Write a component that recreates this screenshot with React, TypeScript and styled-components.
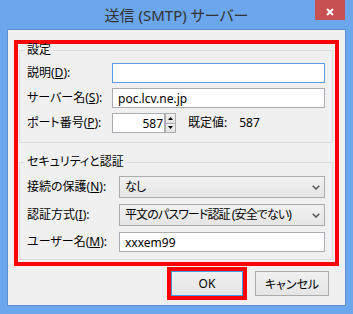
import React from 'react';
import styled, { createGlobalStyle } from 'styled-components';

const Global = createGlobalStyle`
  html, body { margin: 0; padding: 0; background: #6ca6ec; }
  body {
    font-family: "Noto Sans", "Noto Sans CJK JP", sans-serif;
    font-feature-settings: "palt";
  }
  * { box-sizing: border-box; }
`;

const Window = styled.div`
  width: 353px;
  height: 314px;
  background: #6ca6ec;
  display: flex;
  flex-direction: column;
  padding: 0 7px 8px;
`;

const TitleBar = styled.div`
  height: 29px;
  display: grid;
  grid-template-columns: 1fr auto 1fr;
  align-items: start;
`;

const Title = styled.div`
  grid-column: 2;
  align-self: center;
  font-size: 15px;
  line-height: 18px;
  color: #333;
  padding-top: 1px;
  white-space: nowrap;
`;

const CloseButton = styled.div`
  grid-column: 3;
  justify-self: end;
  margin-right: 1px;
  width: 30px;
  height: 20px;
  background: #c75050;
  display: flex;
  align-items: center;
  justify-content: center;
  padding-top: 3px;
`;

const Client = styled.div`
  flex: 1;
  background: #f0f0f0;
  border: 1px solid #5b8fd1;
  padding: 10px 6px 0;
  display: flex;
  flex-direction: column;
`;

const Highlight = styled.div`
  border: 4px solid #ff0000;
  padding: 0 2px 2px 1px;
  display: flex;
  flex-direction: column;
  gap: 13px;
`;

const Group = styled.fieldset<{ $pad: string }>`
  margin: 0;
  min-width: 0;
  border: 1px solid #dcdcdc;
  padding: ${p => p.$pad};
`;

const Legend = styled.legend`
  padding: 0 2px;
  margin-left: -2px;
  font-size: 12px;
  line-height: 12px;
  color: #000;
`;

const Rows = styled.div<{ $label: number; $gap: number }>`
  display: grid;
  grid-template-columns: ${p => p.$label}px 1fr;
  row-gap: ${p => p.$gap}px;
  align-items: center;
`;

const Label = styled.label`
  font-size: 12px;
  line-height: 16px;
  color: #000;
  white-space: nowrap;
`;

const TextBox = styled.input<{ $focused?: boolean; $align?: string; $width?: number }>`
  width: ${p => (p.$width ? `${p.$width}px` : '100%')};
  height: 20px;
  border: 1px solid ${p => (p.$focused ? '#569de5' : '#abadb3')};
  background: #fff;
  padding: 0 ${p => (p.$align === 'right' ? '1px' : '5px')};
  text-align: ${p => p.$align || 'left'};
  font-family: "Noto Sans", "Noto Sans CJK JP", sans-serif;
  font-feature-settings: "palt";
  font-size: 12px;
  color: #000;
  outline: none;
  margin: 0;
`;

const PortRow = styled.div`
  display: flex;
  align-items: center;
`;

const Spin = styled.div`
  display: flex;
  flex-direction: column;
  width: 11px;
  height: 20px;
`;

const SpinHalf = styled.div`
  flex: 1;
  border: 1px solid #acacac;
  background: linear-gradient(#f2f2f2, #e3e3e3);
  display: flex;
  align-items: center;
  justify-content: center;
  & + & { border-top: none; }
`;

const DefaultText = styled.span<{ $ml: number }>`
  font-size: 12px;
  line-height: 16px;
  color: #000;
  margin-left: ${p => p.$ml}px;
  white-space: nowrap;
`;

const Dropdown = styled.div`
  height: 22px;
  border: 1px solid #acacac;
  background: linear-gradient(#f2f2f2, #e5e5e5);
  display: flex;
  align-items: center;
  justify-content: space-between;
  padding: 0 4px 0 5px;
  font-size: 12px;
  line-height: 16px;
  color: #000;
  white-space: nowrap;
  overflow: hidden;
`;

const DropdownValue = styled.span`
  letter-spacing: -0.9px;
`;

const ButtonRow = styled.div`
  margin-top: 1px;
  display: flex;
  justify-content: flex-end;
  align-items: center;
  gap: 8px;
  padding-right: 10px;
`;

const RedFrame = styled.div`
  border: 4px solid #ff0000;
  display: flex;
`;

const Button = styled.button<{ $default?: boolean; $width: number }>`
  width: ${p => p.$width}px;
  height: 25px;
  border: 1px solid ${p => (p.$default ? '#3c9ae8' : '#acacac')};
  background: linear-gradient(#f0f0f0, #e5e5e5);
  font-family: "Noto Sans", "Noto Sans CJK JP", sans-serif;
  font-feature-settings: "palt";
  font-size: 12px;
  color: #000;
  padding: 0;
  margin: 0;
`;

const Chevron = () => (
  <svg width="8" height="5" viewBox="0 0 8 5">
    <path d="M0.7 0.7 L4 4 L7.3 0.7" fill="none" stroke="#555" strokeWidth="1.5" />
  </svg>
);

const Tri = ({ up }: { up?: boolean }) => (
  <svg width="5" height="3" viewBox="0 0 5 3">
    <path d={up ? 'M0 3 L2.5 0 L5 3 Z' : 'M0 0 L5 0 L2.5 3 Z'} fill="#000" />
  </svg>
);

export default function App() {
  return (
    <>
      <Global />
      <Window>
        <TitleBar>
          <Title>送信 (SMTP) サーバー</Title>
          <CloseButton>
            <svg width="8" height="8" viewBox="0 0 8 8">
              <path d="M1 1 L7 7 M7 1 L1 7" stroke="#fff" strokeWidth="2" />
            </svg>
          </CloseButton>
        </TitleBar>
        <Client>
          <Highlight>
            <Group $pad="7px 7px 9px 7px">
              <Legend>設定</Legend>
              <Rows $label={85} $gap={5}>
                <Label>説明(<u>D</u>):</Label>
                <TextBox readOnly value="" $focused />
                <Label>サーバー名(<u>S</u>):</Label>
                <TextBox readOnly value="poc.lcv.ne.jp" />
                <Label>ポート番号(<u>P</u>):</Label>
                <PortRow>
                  <TextBox readOnly value="587" $align="right" $width={53} />
                  <Spin>
                    <SpinHalf><Tri up /></SpinHalf>
                    <SpinHalf><Tri /></SpinHalf>
                  </Spin>
                  <DefaultText $ml={12}>既定値:</DefaultText>
                  <DefaultText $ml={12}>587</DefaultText>
                </PortRow>
              </Rows>
            </Group>
            <Group $pad="8px 7px 7px 7px">
              <Legend>セキュリティと認証</Legend>
              <Rows $label={92} $gap={6}>
                <Label>接続の保護(<u>N</u>):</Label>
                <Dropdown><DropdownValue>なし</DropdownValue><Chevron /></Dropdown>
                <Label>認証方式(<u>I</u>):</Label>
                <Dropdown><DropdownValue>平文のパスワード認証 (安全でない)</DropdownValue><Chevron /></Dropdown>
                <Label>ユーザー名(<u>M</u>):</Label>
                <TextBox readOnly value="xxxem99" />
              </Rows>
            </Group>
          </Highlight>
          <ButtonRow>
            <RedFrame>
              <Button $default $width={72}>OK</Button>
            </RedFrame>
            <Button $width={74}>キャンセル</Button>
          </ButtonRow>
        </Client>
      </Window>
    </>
  );
}
